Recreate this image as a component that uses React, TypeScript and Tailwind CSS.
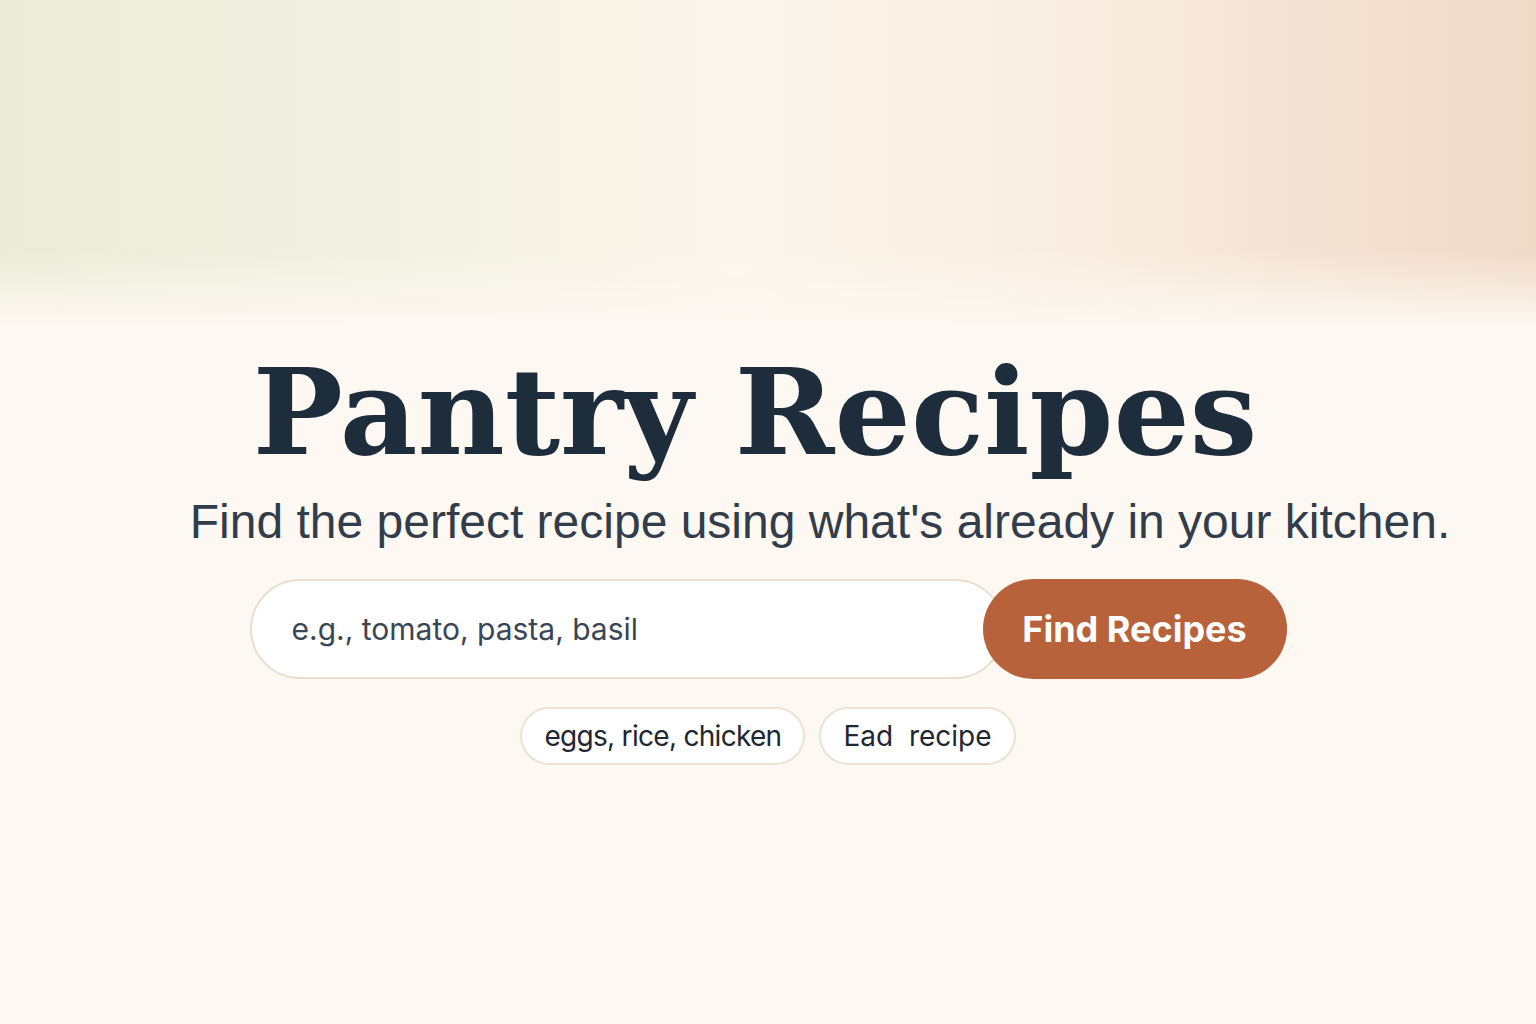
import React from 'react';

export default function App() {
  return (
    <div className="relative h-[1024px] w-full overflow-hidden bg-[#fdf8f1]">
      {/* soft top wash */}
      <div className="pointer-events-none absolute inset-x-0 top-0 h-[360px] bg-[linear-gradient(90deg,#eaecd8_0%,#f1f1e2_25%,#fcf6ec_48%,#f9ede1_70%,#efd9c7_100%)] [mask-image:linear-gradient(to_bottom,black_0%,black_70%,transparent_90%)]" />

      <main className="relative flex flex-col items-center pt-[352px]">
        <h1 className="pr-[26px] font-['DejaVu_Serif',serif] text-[120px] font-bold leading-none text-[#1e2d3b]">
          Pantry Recipes
        </h1>
        <p className="mt-[26px] pl-[104px] font-['Liberation_Sans',Arial,sans-serif] text-[48px] leading-none text-[#323d4c]">
          Find the perfect recipe using what's already in your kitchen.
        </p>

        <form className="mt-[33px] flex items-center" onSubmit={(e) => e.preventDefault()}>
          <input
            type="text"
            placeholder="e.g., tomato, pasta, basil"
            className="h-[100px] w-[755px] rounded-full border-2 border-[#e8e0cf] bg-white pl-[40px] pr-[40px] font-['Inter',sans-serif] text-[30px] text-[#2f3a48] placeholder:text-[#3a4555] outline-none"
          />
          <button
            type="submit"
            className="-ml-[22px] h-[100px] w-[304px] rounded-full bg-[#b7623a] font-['Inter',sans-serif] text-[36px] font-bold text-white"
          >
            Find Recipes
          </button>
        </form>

        <div className="mt-[28px] flex gap-[14px]">
          <span className="flex h-[58px] items-center rounded-full border-2 border-[#ebe4d3] bg-white px-[22px] font-['Inter',sans-serif] text-[28px] tracking-[-0.025em] text-[#1f2733]">
            eggs, rice, chicken
          </span>
          <span className="flex h-[58px] items-center rounded-full border-2 border-[#ebe4d3] bg-white px-[22px] font-['Inter',sans-serif] text-[28px] text-[#1f2733]">
            Ead&nbsp; recipe
          </span>
        </div>
      </main>
    </div>
  );
}
